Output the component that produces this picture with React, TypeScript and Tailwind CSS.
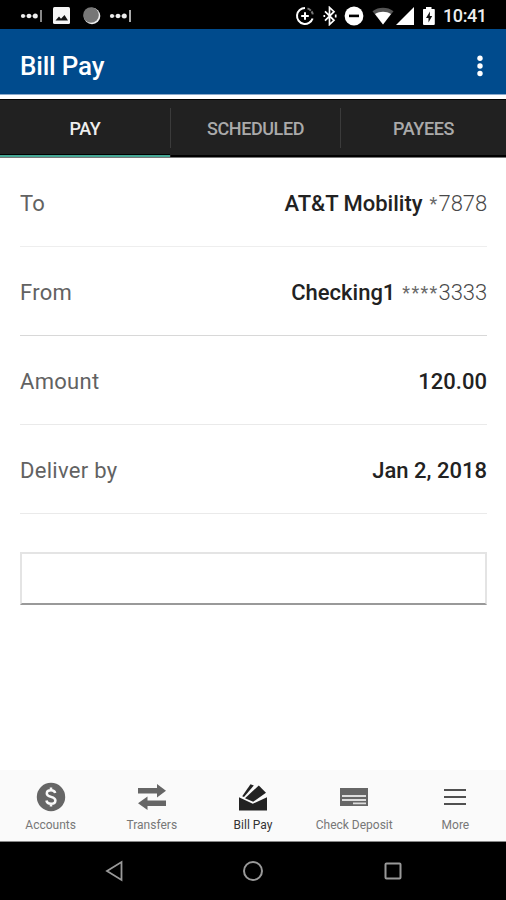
import type { ReactNode } from "react";

const tabs = [
  { label: "PAY", active: true },
  { label: "SCHEDULED", active: false },
  { label: "PAYEES", active: false },
];

type RowProps = { label: string; value: string; stars?: string; digits?: string; line: string; weight?: string };

function Row({ label, value, stars, digits, line, weight = "font-medium" }: RowProps) {
  return (
    <div className={`flex h-[89px] items-center justify-between border-b pt-[2px] ${line}`}>
      <span className="text-[22px] tracking-[0.3px] text-[#626262]">{label}</span>
      <span className={`flex items-center whitespace-pre text-[22px] text-[#222] ${weight}`}>
        {value}
        {stars && (
          <span className="flex font-normal text-[#6a6a6a]">
            <span className="relative top-[3px] ml-[7px] text-[18px] tracking-[1.3px]">{stars}</span>
            <span className="font-light tracking-[-0.1px] text-[#484848]">{digits}</span>
          </span>
        )}
      </span>
    </div>
  );
}

function EllipsisMark({ bar }: { bar: string }) {
  return (
    <svg width="24" height="12" viewBox="0 0 24 12" fill="#eee">
      <circle cx="3" cy="6" r="2.1" />
      <circle cx="9" cy="6" r="2.3" />
      <circle cx="15.3" cy="6" r="2.5" />
      <path d="M3 5.5h12v1H3z" opacity=".5" />
      <path d="M20 0h2v12h-2z" fill={bar} />
    </svg>
  );
}

function StatusBar() {
  return (
    <div className="flex h-[29px] items-center bg-black pt-[2px]">
      <div className="ml-[20px] flex flex-1 items-center">
        <EllipsisMark bar="#888" />
        <svg className="ml-[9px]" width="17" height="17" viewBox="0 0 17 17">
          <rect width="17" height="17" rx="1.5" fill="#f5f5f5" />
          <path d="M2.5 13.500 6 9.500l2 2.300L11.500 8l3.500 5.500z" fill="#111" />
        </svg>
        <svg className="ml-[13px]" width="18" height="18" viewBox="0 0 18 18">
          <circle cx="9" cy="9" r="8.300" fill="#eee" />
          <circle cx="8" cy="8" r="7.800" fill="#777" />
        </svg>
        <div className="ml-[8px] flex"><EllipsisMark bar="#aaa" /></div>
      </div>
      <div className="mr-[20px] flex items-center">
        <svg width="20" height="20" viewBox="0 0 20 20" fill="none" stroke="#fff" strokeWidth="2">
          <path d="M10 2a8 8 0 1 0 7.600 10.500" />
          <path d="M12.500 2.400a8 8 0 0 1 5.300 6" stroke="#777" strokeDasharray="4 1" />
          <path d="M10 6.200v7.600M6.200 10h7.600" />
        </svg>
        <svg className="ml-[8px]" width="14" height="20" viewBox="0 0 14 20" fill="none" stroke="#fff" strokeWidth="1.700">
          <path d="m2 5.300 9 9-4.500 4.200V1.500L11 5.700l-9 9M12.700 8.500v3M1.300 9v2" />
        </svg>
        <svg className="ml-[7px]" width="20" height="20" viewBox="0 0 20 20">
          <circle cx="10" cy="10" r="9.400" fill="#fff" />
          <path d="M5 8.600h10v2.600H5z" />
        </svg>
        <svg className="ml-[8px]" width="22" height="20" viewBox="0 0 22 20">
          <path d="M0.500 5.200C6.500.7 15.500.7 21.500 5.200L11 18.500z" fill="#555" />
          <path d="M3 8c4.700-3 11.300-3 16 0l-8 10.500z" fill="#fff" />
        </svg>
        <svg className="ml-[2px]" width="18" height="20" viewBox="0 0 18 20">
          <path d="M18 1v18H0z" fill="#fff" />
        </svg>
        <svg className="ml-[9px]" width="12" height="20" viewBox="0 0 12 20">
          <path d="M3 1h5.500v2H11a.8.8 0 0 1 .8.8V18a1 1 0 0 1-1 1H1a1 1 0 0 1-1-1V3.800A.8.8 0 0 1 .8 3H3z" fill="#fff" />
          <path d="M7 5.500 3 12h2.500v4.500L9.200 10H6.800z" fill="#111" />
        </svg>
        <span className="ml-[8px] w-[43px] whitespace-nowrap text-[18px] font-medium leading-5 tracking-[-0.4px] text-[#eee]">10:41</span>
      </div>
    </div>
  );
}

function NavItem({ label, icon, active = false }: { label: string; icon: ReactNode; active?: boolean }) {
  return (
    <div className={`flex flex-1 flex-col items-center ${active ? "text-[#222]" : "text-[#666]"}`}>
      <div className="mt-[12px] flex h-[30px] items-center">{icon}</div>
      <span className={`mt-[6px] whitespace-nowrap text-[12px] leading-[14px] ${active ? "text-[#333]" : "text-[#777]"}`}>{label}</span>
    </div>
  );
}

export default function App() {
  return (
    <div className="flex h-[900px] w-[506px] flex-col overflow-hidden bg-white font-['Roboto',sans-serif]">
      <StatusBar />
      <header className="flex h-[65px] items-center justify-between bg-[#004b8d] pl-[20px] pr-[23px]">
        <h1 className="relative top-[4px] text-[26px] font-medium leading-8 tracking-[-0.2px] text-white">Bill Pay</h1>
        <svg className="relative top-[4px]" width="6" height="22" viewBox="0 0 6 22" fill="#fff">
          <circle cx="3" cy="3.300" r="2.700" />
          <circle cx="3" cy="11" r="2.700" />
          <circle cx="3" cy="18.500" r="2.700" />
        </svg>
      </header>
      <div className="h-[5px] border-t border-[#8ba9ca] bg-white" />
      <nav className="grid h-[59px] grid-cols-[171px_170px_165px] border-b border-[#777] bg-[#212121]">
        {tabs.map((t, i) => (
          <div key={t.label} className={`flex flex-col border-t border-t-black ${t.active ? "text-[#eee]" : "text-[#aaa]"}`}>
            <div className={`mt-[8px] flex h-[40px] items-center justify-center text-[18px] font-medium tracking-[-0.4px] ${i < 2 ? "border-r border-[#3b3b3b]" : ""}`}>
              {t.label}
            </div>
            <div className={`mt-auto h-[3px] ${t.active ? "mr-px border-t border-black bg-[#45a795]" : "border-b-2 border-black"}`} />
          </div>
        ))}
      </nav>
      <main className="flex flex-1 flex-col pl-[20px] pr-[19px]">
        <div>
          <Row label="To" value="AT&T Mobility" stars="*" digits="7878" line="border-[#eee]" />
          <Row label="From" value="Checking1" stars="****" digits="3333" line="border-[#d8d8d8]" />
          <Row label="Amount" value="120.00" line="border-[#eaeaea]" />
          <Row label="Deliver by" value="Jan 2, 2018" line="border-[#eaeaea]" />
        </div>
        <div className="mt-[38px] h-[53px] border-2 border-[#e4e4e4] border-b-[#999] bg-white" />
      </main>
      <footer className="flex h-[72px] border-b border-[#888] bg-[#fafafa]">
        <NavItem label="Accounts" icon={
          <svg width="30" height="30" viewBox="0 0 30 30">
            <circle cx="15" cy="15" r="14.200" fill="currentColor" />
            <path d="M19.200 11c-.5-2-2-2.800-4.200-2.800-2.500 0-4.200 1.200-4.200 3.200 0 4.500 8.600 2.500 8.600 7 0 2-1.800 3.300-4.400 3.300-2.400 0-4.200-1-4.600-3.200M15 5.500v3M15 21.500v3" fill="none" stroke="#fafafa" strokeWidth="2.500" />
          </svg>} />
        <NavItem label="Transfers" icon={
          <svg width="30" height="26" viewBox="0 0 30 26" fill="currentColor">
            <path d="M1 4h19V0l9 6.700-9 6.700V9.400H1zM29 16.600H10.500V12.600L1 19.300l9.500 6.700v-4H29z" />
          </svg>} />
        <NavItem active label="Bill Pay" icon={
          <svg width="30" height="28" viewBox="0 0 30 28" fill="currentColor">
            <path d="M1 14.300 14.800 20.800 29 14.300V27.500H1z" />
            <path d="M7 15.200 20.800 2.500 28 9.800 15.200 18.800z" />
            <path d="M4.200 13.200 12.500 1.200 15.800 2.500 6 14z" />
          </svg>} />
        <NavItem label="Check Deposit" icon={
          <svg width="30" height="20" viewBox="0 0 30 20">
            <path d="M1 1h28v18H1z" fill="currentColor" />
            <path d="M3 8h24v2H3zM3 12h24v2H3zM14 15.500h13v1.700H14z" fill="#ddd" />
          </svg>} />
        <NavItem label="More" icon={
          <svg width="22" height="18" viewBox="0 0 22 18" fill="#505050">
            <path d="M0 1h22v2H0zM0 8h22v2H0zM0 15h22v2H0z" />
          </svg>} />
      </footer>
      <div className="flex h-[58px] items-center justify-around bg-black pl-[45px] pr-[44px]">
        <svg width="20" height="22" viewBox="0 0 20 22" fill="none" stroke="#999" strokeWidth="1.800">
          <path d="M17.500 2v18L3 11z" />
        </svg>
        <svg width="22" height="22" viewBox="0 0 22 22" fill="none" stroke="#999" strokeWidth="2">
          <circle cx="11" cy="11" r="9" />
        </svg>
        <svg width="20" height="20" viewBox="0 0 20 20" fill="none" stroke="#999" strokeWidth="2">
          <rect x="2.500" y="2.500" width="15" height="15" rx="1" />
        </svg>
      </div>
    </div>
  );
}
